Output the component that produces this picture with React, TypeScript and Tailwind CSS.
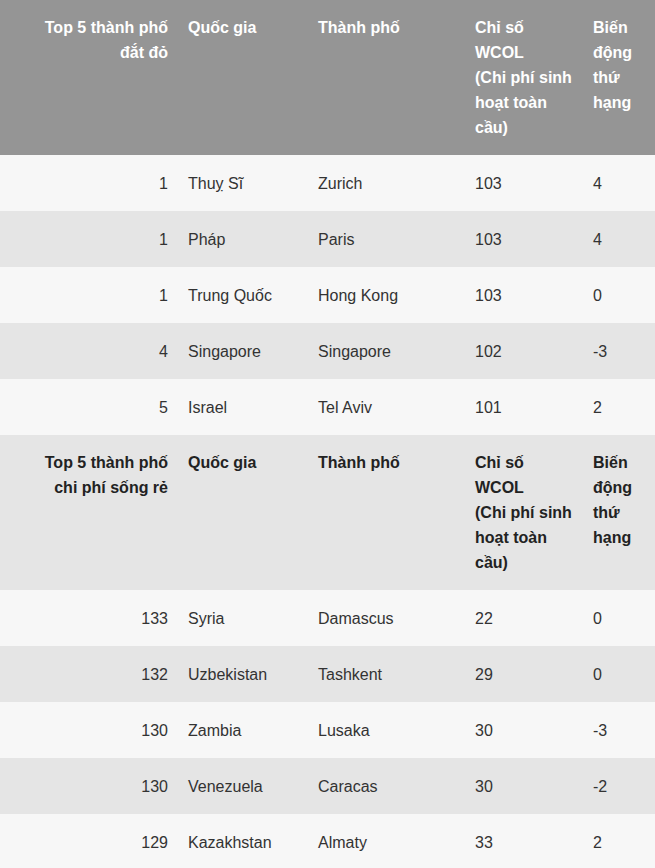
const expensive = [
  { rank: '1', country: 'Thuỵ Sĩ', city: 'Zurich', wcol: '103', change: '4' },
  { rank: '1', country: 'Pháp', city: 'Paris', wcol: '103', change: '4' },
  { rank: '1', country: 'Trung Quốc', city: 'Hong Kong', wcol: '103', change: '0' },
  { rank: '4', country: 'Singapore', city: 'Singapore', wcol: '102', change: '-3' },
  { rank: '5', country: 'Israel', city: 'Tel Aviv', wcol: '101', change: '2' },
]

const cheap = [
  { rank: '133', country: 'Syria', city: 'Damascus', wcol: '22', change: '0' },
  { rank: '132', country: 'Uzbekistan', city: 'Tashkent', wcol: '29', change: '0' },
  { rank: '130', country: 'Zambia', city: 'Lusaka', wcol: '30', change: '-3' },
  { rank: '130', country: 'Venezuela', city: 'Caracas', wcol: '30', change: '-2' },
  { rank: '129', country: 'Kazakhstan', city: 'Almaty', wcol: '33', change: '2' },
]

type Row = (typeof expensive)[number]

function HeaderRow({ first, dark }: { first: string; dark: boolean }) {
  const cls = dark
    ? 'bg-[#959595] text-white'
    : 'bg-[#e5e5e5] text-[#222]'
  const th = 'pr-[10px] pt-[15px] pb-[15px] align-top font-bold leading-[25px]'
  return (
    <tr className={cls}>
      <th className={`${th} pl-[28px] text-right`}>{first}</th>
      <th className={`${th} pl-[10px] text-left`}>Quốc gia</th>
      <th className={`${th} pl-[10px] text-left`}>Thành phố</th>
      <th className={`${th} pl-[10px] text-left`}>
        Chỉ số WCOL
        <br />
        (Chi phí sinh hoạt toàn cầu)
      </th>
      <th className={`${th} pl-[10px] text-left`}>Biến động thứ hạng</th>
    </tr>
  )
}

function DataRow({ row, light }: { row: Row; light: boolean }) {
  const td = 'px-[10px] pt-[16px] pb-[14px] leading-[26px] align-middle'
  return (
    <tr className={light ? 'bg-[#f7f7f7]' : 'bg-[#e5e5e5]'}>
      <td className={`${td} text-right`}>{row.rank}</td>
      <td className={td}>{row.country}</td>
      <td className={td}>{row.city}</td>
      <td className={td}>{row.wcol}</td>
      <td className={td}>{row.change}</td>
    </tr>
  )
}

export default function App() {
  return (
    <div className="w-[655px] bg-white font-['Liberation_Sans',Arial,sans-serif] text-[16px] text-[#333]">
      <table className="w-full table-fixed border-collapse">
        <colgroup>
          <col className="w-[178px]" />
          <col className="w-[130px]" />
          <col className="w-[157px]" />
          <col className="w-[118px]" />
          <col className="w-[72px]" />
        </colgroup>
        <tbody>
          <HeaderRow first="Top 5 thành phố đắt đỏ" dark />
          {expensive.map((r, i) => (
            <DataRow key={'e' + i} row={r} light={i % 2 === 0} />
          ))}
          <HeaderRow first="Top 5 thành phố chi phí sống rẻ" dark={false} />
          {cheap.map((r, i) => (
            <DataRow key={'c' + i} row={r} light={i % 2 === 0} />
          ))}
        </tbody>
      </table>
    </div>
  )
}
